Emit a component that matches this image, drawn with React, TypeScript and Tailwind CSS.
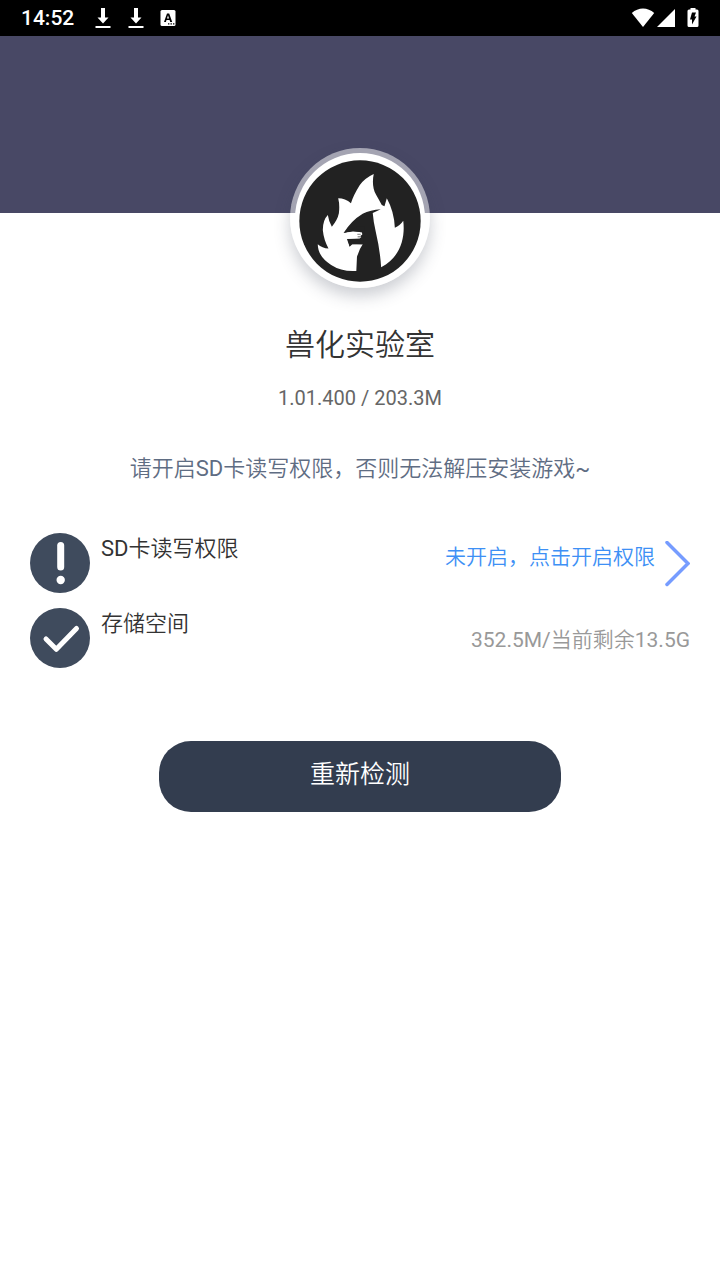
import { useState } from "react";

const DownloadIcon = () => (
    <svg className="w-4 h-5" viewBox="0 0 16 20" fill="#fff" aria-hidden="true">
        <path d="M6 0h4v9.5h3.500L8 15.5 2.500 9.5H6z" />
        <path d="M.5 18h15v2H.5z" />
    </svg>
);

const KeyboardIcon = () => (
    <svg className="w-4 h-4" viewBox="0 0 16 16" aria-hidden="true">
        <rect x="0.5" width="15" height="16" rx="1.5" fill="#fff" />
        <path fill="#000" fillRule="evenodd" d="M4 12 7 3.4h2.2l3 8.6h-2l-.6-1.900H6.5L5.900 12zM7 8.500h2L8 5.3z" />
        <path fill="#000" d="M8 13.200h1.4v1.4H8zM10.5 13.200h1.4v1.4h-1.4zM13 13.200h1.4v1.4H13z" />
    </svg>
);

const StatusBar = () => (
    <header className="h-9 bg-black flex items-center justify-between px-[21px]">
        <div className="flex items-center text-white">
            <span className="text-[21px] leading-9 font-medium mr-[21px]">14:52</span>
            <div className="flex items-center gap-[17px]">
                <DownloadIcon />
                <DownloadIcon />
            </div>
            <span className="ml-4">
                <KeyboardIcon />
            </span>
        </div>
        <div className="flex items-center" aria-hidden="true">
            <svg className="w-6 h-5" viewBox="0 0 24 20" fill="#fff">
                <path d="M12 19 .8 5C4 2 8 .5 12 .5s8 1.500 11.200 4.500z" />
            </svg>
            <svg className="w-5 h-5 ml-[1px]" viewBox="0 0 20 20" fill="#fff">
                <path d="M19 1v18H1z" />
            </svg>
            <svg className="w-3 h-5 ml-[11px]" viewBox="0 0 12 20">
                <path fill="#fff" d="M3.500 0h5v1.500H10q1.500 0 1.500 1.500v14.500Q11.500 19 10 19H2Q.500 19 .500 17.500V3Q.500 1.500 2 1.500h1.500z" />
                <path fill="#000" d="M5 4.500h4L7.500 8.500H9.500L5 16.500V11.500H3z" />
            </svg>
        </div>
    </header>
);

const GameLogo = () => (
    <svg className="w-[122px] h-[122px]" viewBox="57 61 364 364" role="img" aria-label="兽化实验室">
        <circle cx="239" cy="243" r="181" fill="#222" />
        <path
            fill="#fff"
            d="M280 103C276 122 276 145 287 165Q296 181 304 195L312 199 319 175Q341 215 343 263 358 257 368 242C374 290 362 350 302 381Q299 330 286 275 279 245 277 219L301 208Q270 210 247 221 212 242 190 279L218 274 246 276 248 286 240 294 200 297 208 319 211 312 248 311Q236 328 230 350L228 392Q185 395 153 374 113 349 113 312 126 324 145 325 131 300 128 270 128 240 143 225 146 245 155 260 172 240 176 220 179 195 174 175 195 175 212 190 218 168 238 136 254 115 280 103z"
        />
        <path fill="#222" d="M190 279 216 272 245 277 246 283 236 291 242 300 203 298 208 320 216 312 249 313 254 260 230 260z" />
        <path fill="#fff" d="M191 281Q203 276 216 277L239 278Q245 281 240 284L229 286 243 291 238 295 200 296z" />
        <path fill="#999" d="M231 281h10v4h-10zM232 288h10v4h-10z" />
    </svg>
);

const AlertIcon = () => (
    <svg className="w-[60px] h-[60px] shrink-0" viewBox="0 0 60 60" aria-hidden="true">
        <circle cx="30" cy="30" r="30" fill="#3f4b5d" />
        <path d="M30.700 12.500v21.500" stroke="#fff" strokeWidth="7" strokeLinecap="round" />
        <circle cx="30.700" cy="47" r="4.200" fill="#fff" />
    </svg>
);

const CheckIcon = () => (
    <svg className="w-[60px] h-[60px] shrink-0" viewBox="0 0 60 60" aria-hidden="true">
        <circle cx="30" cy="30" r="30" fill="#3f4b5d" />
        <path d="M16 31 26.300 41.300 46.500 20.500" fill="none" stroke="#fff" strokeWidth="5" strokeLinecap="round" strokeLinejoin="round" />
    </svg>
);

export default function App() {
    const [game] = useState({
        name: "兽化实验室",
        version: "1.01.400",
        size: "203.3M",
        required: "352.5M",
        free: "13.5G",
    });

    return (
        <div className="min-h-screen bg-white font-['Roboto','Noto_Sans_CJK_SC_DemiLight','Noto_Sans_CJK_SC_Light','Noto_Sans_CJK_SC',sans-serif]">
            <StatusBar />
            <div className="h-[177px] bg-[#484865]" />

            <main>
                <section className="flex flex-col items-center text-center -mt-[65px]">
                    <div className="w-[140px] h-[140px] rounded-full bg-white/50 p-[5px] shadow-[0_8px_16px_rgba(50,61,79,0.25)]">
                        <div className="w-full h-full rounded-full bg-white flex items-end justify-center pb-[1px]">
                            <GameLogo />
                        </div>
                    </div>
                    <h1 className="mt-[37px] text-[30px] leading-10 text-[#333]">{game.name}</h1>
                    <p className="mt-[19px] text-[20px] leading-7 text-[#666]">{game.version} / {game.size}</p>
                    <p className="mt-[41px] text-[22px] leading-8 text-[#5f6d83]">
                        请开启SD卡读写权限，否则无法解压安装游戏~
                    </p>
                </section>

                <ul className="mt-12 px-[30px] flex flex-col gap-[15px]">
                    <li className="flex">
                        <AlertIcon />
                        <span className="ml-[11px] text-[22px] leading-8 text-[#333]">SD卡读写权限</span>
                        <button type="button" className="ml-auto flex items-start cursor-pointer">
                            <span className="mt-2 text-[21px] leading-8 text-[#3e90f5]">未开启，点击开启权限</span>
                            <svg className="mt-2 ml-[10px] w-[25px] h-[46px]" viewBox="0 0 25 46" fill="none" aria-hidden="true">
                                <path d="M2 1.500 23 22.500 2 43.500" stroke="#769cff" strokeWidth="3.500" strokeLinecap="round" />
                            </svg>
                        </button>
                    </li>
                    <li className="flex">
                        <CheckIcon />
                        <span className="ml-[11px] text-[22px] leading-8 text-[#333]">存储空间</span>
                        <span className="ml-auto mt-4 text-[21px] leading-8 text-[#999]">
                            {game.required}/当前剩余{game.free}
                        </span>
                    </li>
                </ul>

                <div className="mt-[73px] flex justify-center">
                    <button
                        type="button"
                        className="w-[402px] h-[71px] pb-1 rounded-[32px] bg-[#333d4f] text-white text-[25px] leading-8 cursor-pointer"
                    >
                        重新检测
                    </button>
                </div>
            </main>
        </div>
    );
}
